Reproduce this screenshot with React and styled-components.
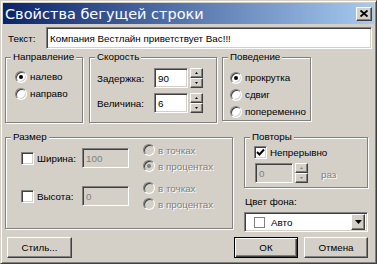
import React from 'react'
import styled, { createGlobalStyle } from 'styled-components'

const GlobalStyle = createGlobalStyle`
  html, body {
    margin: 0;
    padding: 0;
    background: #ffffff;
  }
  body {
    font-family: "Liberation Sans", Arial, sans-serif;
    font-size: 9.8px;
    color: #000;
  }
`

const Window = styled.div`
  width: 377px;
  height: 264px;
  box-sizing: border-box;
  background: #d4d0c8;
  border: 1px solid;
  border-color: #d4d0c8 #404040 #404040 #d4d0c8;
  box-shadow: inset 1px 1px #fff, inset -1px -1px #808080;
  padding: 2px;
  display: flex;
  flex-direction: column;
`

const TitleBar = styled.div`
  height: 21px;
  flex: none;
  display: flex;
  align-items: center;
  justify-content: space-between;
  padding: 0 2px 0 2px;
  background: linear-gradient(to right, #0a246a, #a6caf0);
`

const Title = styled.span`
  color: #fff;
  font-family: "DejaVu Sans", "Liberation Sans", sans-serif;
  font-size: 14.5px;
  line-height: 18px;
  white-space: nowrap;
`

const raised = `
  background: #d4d0c8;
  border: 1px solid;
  border-color: #fff #404040 #404040 #fff;
  box-shadow: inset -1px -1px #808080;
  box-sizing: border-box;
`

const sunken = `
  border: 1px solid;
  border-color: #808080 #fff #fff #808080;
  box-shadow: inset 1px 1px #404040, inset -1px -1px #d4d0c8;
  box-sizing: border-box;
`

const CloseButton = styled.div`
  ${raised}
  width: 16px;
  height: 14px;
  display: flex;
  align-items: center;
  justify-content: center;
`

const TextRow = styled.div`
  display: flex;
  align-items: center;
  height: 22px;
  margin-top: 3px;
  padding-right: 2px;
`

const TextLabel = styled.span`
  width: 38px;
  padding-left: 5px;
  flex: none;
`

const Field = styled.div`
  ${sunken}
  background: ${p => (p.$disabled ? '#d4d0c8' : '#fff')};
  color: ${p => (p.$disabled ? '#808080' : '#000')};
  width: ${p => (p.$w ? `${p.$w}px` : 'auto')};
  flex: ${p => (p.$w ? 'none' : '1')};
  height: ${p => p.$h || 20}px;
  display: flex;
  align-items: center;
  padding-left: 3px;
  white-space: nowrap;
  overflow: hidden;
`

const Row = styled.div`
  display: flex;
  align-items: flex-start;
  margin-top: ${p => p.$mt}px;
  padding-left: ${p => p.$pl || 0}px;
`

const GroupBox = styled.div`
  position: relative;
  flex: none;
  box-sizing: border-box;
  width: ${p => p.$w}px;
  height: ${p => p.$h}px;
  margin-left: ${p => p.$ml || 0}px;
  border: 1px solid #808080;
  box-shadow: inset 1px 1px #fff, 1px 1px #fff;
  padding: ${p => p.$pad};
`

const Caption = styled.span`
  position: absolute;
  top: -7px;
  left: 5px;
  padding: 0 2px;
  line-height: 12px;
  background: #d4d0c8;
`

const OptionRow = styled.div`
  display: flex;
  align-items: center;
  height: ${p => p.$h || 17}px;
  color: ${p => (p.$disabled ? '#808080' : '#000')};
  text-shadow: ${p => (p.$disabled ? '1px 1px #fff' : 'none')};
  white-space: nowrap;
`

const RadioDot = styled.span`
  ${sunken}
  width: 12px;
  height: 12px;
  border-radius: 50%;
  flex: none;
  margin-right: 3px;
  background: ${p => (p.$disabled ? '#d4d0c8' : '#fff')};
  display: flex;
  align-items: center;
  justify-content: center;
  &::after {
    content: '';
    width: 4px;
    height: 4px;
    border-radius: 50%;
    background: ${p => (p.$disabled ? '#808080' : '#000')};
    display: ${p => (p.$checked ? 'block' : 'none')};
  }
`

const CheckBox = styled.span`
  ${sunken}
  width: 13px;
  height: 13px;
  flex: none;
  margin-right: 3px;
  background: #fff;
  display: flex;
  align-items: center;
  justify-content: center;
`

const SpeedRow = styled.div`
  display: flex;
  align-items: center;
  height: 20px;
  margin-top: ${p => p.$mt || 0}px;
`

const SpeedLabel = styled.span`
  width: 57px;
  flex: none;
`

const Spin = styled.div`
  display: flex;
  flex-direction: column;
  margin-left: ${p => p.$ml || 2}px;
  flex: none;
`

const SpinButton = styled.div`
  ${raised}
  width: 13px;
  height: 10px;
  display: flex;
  align-items: center;
  justify-content: center;
`

const SizeRow = styled.div`
  display: flex;
  align-items: center;
  height: 32px;
  margin-top: ${p => p.$mt || 0}px;
`

const SizeCheck = styled.div`
  display: flex;
  align-items: center;
  width: 61px;
  flex: none;
`

const RadioColumn = styled.div`
  margin-left: 14px;
  display: flex;
  flex-direction: column;
`

const RightColumn = styled.div`
  margin-left: 11px;
  width: 124px;
  flex: none;
  display: flex;
  flex-direction: column;
`

const RepeatRow = styled.div`
  display: flex;
  align-items: center;
  margin-top: ${p => p.$mt || 0}px;
  padding-left: ${p => p.$pl || 0}px;
`

const Unit = styled.span`
  margin-left: 13px;
  color: #808080;
  text-shadow: 1px 1px #fff;
  margin-top: 3px;
`

const ColorLabel = styled.div`
  margin-top: 8px;
  padding-left: 1px;
  line-height: 11px;
`

const Select = styled.div`
  ${sunken}
  margin-top: 5px;
  height: 20px;
  background: #fff;
  display: flex;
  align-items: center;
  padding: 0 2px 0 9px;
`

const Swatch = styled.span`
  width: 9px;
  height: 9px;
  border: 1px solid #808080;
  background: #fff;
  flex: none;
  margin-right: 6px;
`

const SelectText = styled.span`
  flex: 1;
`

const DropButton = styled.div`
  ${raised}
  width: 14px;
  height: 16px;
  display: flex;
  align-items: center;
  justify-content: center;
`

const ButtonBar = styled.div`
  display: flex;
  align-items: center;
  margin-top: 5px;
  padding: 0 6px 0 4px;
`

const Button = styled.div`
  ${raised}
  width: ${p => p.$w || 64}px;
  height: 21px;
  margin-left: ${p => p.$ml || 0}px;
  display: flex;
  align-items: center;
  justify-content: center;
  ${p => p.$default && `
    border-color: #000;
    box-shadow: inset 1px 1px #fff, inset -1px -1px #404040, inset -2px -2px #808080;
  `}
`

const Spacer = styled.div`
  flex: 1;
`

function Radio({ label, checked, disabled, h }) {
  return (
    <OptionRow $disabled={disabled} $h={h}>
      <RadioDot $checked={checked} $disabled={disabled} />
      {label}
    </OptionRow>
  )
}

function Check({ checked }) {
  return (
    <CheckBox>
      {checked && (
        <svg width="9" height="9" viewBox="0 0 9 9">
          <path d="M1 4 L3.5 6.5 L8 1.5" stroke="#000" strokeWidth="2" fill="none" />
        </svg>
      )}
    </CheckBox>
  )
}

function Arrow({ up, color = '#000', size = 'small' }) {
  if (size === 'big') {
    return (
      <svg width="7" height="4" viewBox="0 0 7 4">
        <path d="M0 0 H7 L3.5 4 Z" fill={color} />
      </svg>
    )
  }
  return (
    <svg width="3" height="2" viewBox="0 0 3 2">
      <path d={up ? 'M0 2 H3 L1.5 0 Z' : 'M0 0 H3 L1.5 2 Z'} fill={color} />
    </svg>
  )
}

function Spinner({ ml, disabled }) {
  const c = disabled ? '#808080' : '#000'
  return (
    <Spin $ml={ml}>
      <SpinButton><Arrow up color={c} /></SpinButton>
      <SpinButton><Arrow color={c} /></SpinButton>
    </Spin>
  )
}

export default function App() {
  return (
    <>
      <GlobalStyle />
      <Window>
        <TitleBar>
          <Title>Свойства бегущей строки</Title>
          <CloseButton>
            <svg width="8" height="7" viewBox="0 0 8 7">
              <path d="M0.5 0.5 L7.5 6.5 M7.5 0.5 L0.5 6.5" stroke="#000" strokeWidth="1.8" />
            </svg>
          </CloseButton>
        </TitleBar>

        <TextRow>
          <TextLabel>Текст:</TextLabel>
          <Field $h={22}>Компания Вестлайн приветствует Вас!!!</Field>
        </TextRow>

        <Row $mt={8} $pl={2}>
          <GroupBox $w={78} $h={66} $pad="10px 0 0 9px">
            <Caption>Направление</Caption>
            <Radio label="налево" checked />
            <Radio label="направо" />
          </GroupBox>
          <GroupBox $w={128} $h={66} $ml={6} $pad="10px 0 0 7px">
            <Caption>Скорость</Caption>
            <SpeedRow>
              <SpeedLabel>Задержка:</SpeedLabel>
              <Field $w={34}>90</Field>
              <Spinner />
            </SpeedRow>
            <SpeedRow $mt={5}>
              <SpeedLabel>Величина:</SpeedLabel>
              <Field $w={34}>6</Field>
              <Spinner />
            </SpeedRow>
          </GroupBox>
          <GroupBox $w={89} $h={64} $ml={5} $pad="11px 0 0 7px">
            <Caption>Поведение</Caption>
            <Radio label="прокрутка" checked />
            <Radio label="сдвиг" />
            <Radio label="попеременно" />
          </GroupBox>
        </Row>

        <Row $mt={14} $pl={2}>
          <GroupBox $w={228} $h={92} $pad="4px 0 0 15px">
            <Caption>Размер</Caption>
            <SizeRow>
              <SizeCheck>
                <Check />
                Ширина:
              </SizeCheck>
              <Field $w={47} $disabled>100</Field>
              <RadioColumn>
                <Radio label="в точках" disabled h={16} />
                <Radio label="в процентах" disabled checked h={16} />
              </RadioColumn>
            </SizeRow>
            <SizeRow $mt={6}>
              <SizeCheck>
                <Check />
                Высота:
              </SizeCheck>
              <Field $w={47} $disabled>0</Field>
              <RadioColumn>
                <Radio label="в точках" disabled h={16} />
                <Radio label="в процентах" disabled h={16} />
              </RadioColumn>
            </SizeRow>
          </GroupBox>

          <RightColumn>
            <GroupBox $w={124} $h={51} $pad="6px 0 0 9px">
              <Caption>Повторы</Caption>
              <RepeatRow>
                <OptionRow>
                  <Check checked />
                  Непрерывно
                </OptionRow>
              </RepeatRow>
              <RepeatRow $mt={2} $pl={1}>
                <Field $w={38} $disabled>0</Field>
                <Spinner ml={0} disabled />
                <Unit>раз</Unit>
              </RepeatRow>
            </GroupBox>
            <ColorLabel>Цвет фона:</ColorLabel>
            <Select>
              <Swatch />
              <SelectText>Авто</SelectText>
              <DropButton><Arrow size="big" /></DropButton>
            </Select>
          </RightColumn>
        </Row>

        <ButtonBar>
          <Button $w={65}>Стиль...</Button>
          <Spacer />
          <Button $default>ОК</Button>
          <Button $ml={6}>Отмена</Button>
        </ButtonBar>
      </Window>
    </>
  )
}
